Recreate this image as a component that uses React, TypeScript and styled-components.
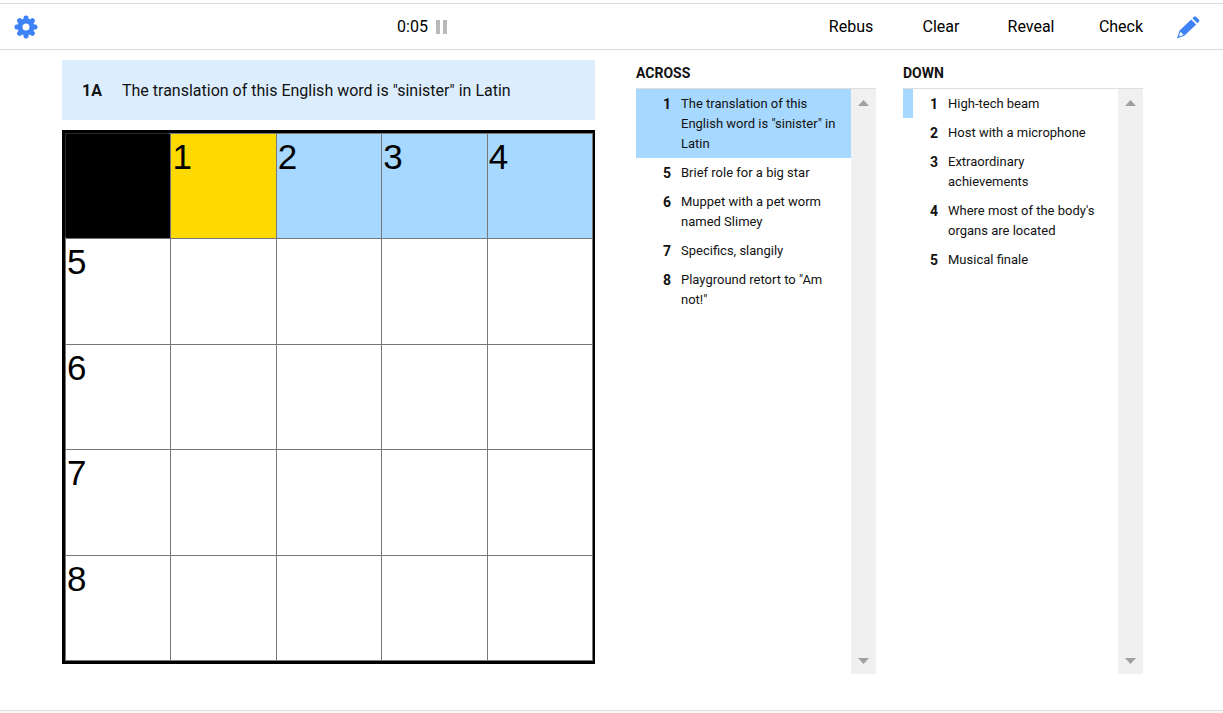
import React, { useState } from "react";
import styled, { createGlobalStyle } from "styled-components";

const GlobalStyle = createGlobalStyle`
  *, *::before, *::after { box-sizing: border-box; }
  body {
    margin: 0;
    background: #fff;
    color: #121212;
    font-family: Roboto, "Liberation Sans", sans-serif;
    font-size: 16px;
  }
  button {
    margin: 0;
    padding: 0;
    border: 0;
    background: none;
    color: inherit;
    font: inherit;
    cursor: pointer;
  }
`;

const Page = styled.div`
  display: flex;
  flex-direction: column;
  min-height: 100vh;
  padding-top: 3px;
`;

const Toolbar = styled.header`
  display: flex;
  align-items: stretch;
  height: 47px;
  padding: 0 13px;
  border-top: 1px solid #dcdcdc;
  border-bottom: 1px solid #dcdcdc;
`;

const IconButton = styled.button<{ $width: number }>`
  display: flex;
  align-items: center;
  justify-content: center;
  width: ${(p) => p.$width}px;
`;

const Timer = styled.button`
  display: flex;
  flex: 1;
  align-items: center;
  justify-content: center;
  gap: 8px;
  color: #000;
`;

const ToolButton = styled.button`
  width: 90px;
  color: #000;
`;

const Main = styled.main`
  display: flex;
  flex: 1;
  gap: 41px;
  padding: 10px 80px 36px 62px;
`;

const Play = styled.section`
  flex: 533 1 0;
  min-width: 0;
`;

const ClueBar = styled.div`
  display: flex;
  align-items: center;
  min-height: 60px;
  margin-bottom: 10px;
  padding: 0 20px;
  background: #dceefe;
`;

const ClueLabel = styled.strong`
  width: 40px;
  font-weight: 700;
`;

const Board = styled.div`
  display: grid;
  grid-template-columns: repeat(5, 1fr);
  gap: 1px;
  padding: 1px;
  border: 3px solid #000;
  border-right-width: 2px;
  background: #777;
`;

type CellState = "block" | "current" | "word" | "empty";

const cellColors: Record<CellState, string> = {
  block: "#000",
  current: "#ffda00",
  word: "#a7d8ff",
  empty: "#fff",
};

const Cell = styled.button<{ $state: CellState }>`
  display: flex;
  align-items: flex-start;
  aspect-ratio: 1;
  padding: 3px 1px;
  background: ${(p) => cellColors[p.$state]};
  box-shadow: ${(p) => (p.$state === "block" ? "-1px -1px 0 #2c2c2c" : "none")};
  color: #000;
  font-family: "Liberation Sans", Arial, sans-serif;
  font-size: 35px;
  line-height: 40px;
`;

const Clues = styled.div`
  display: flex;
  flex: 507 1 0;
  gap: 27px;
  min-width: 0;
`;

const ClueColumn = styled.section`
  display: flex;
  flex: 1 1 0;
  flex-direction: column;
  min-width: 0;
`;

const Heading = styled.h2`
  margin: 0;
  padding: 3px 0 5px;
  font-size: 14px;
  font-weight: 700;
  line-height: 20px;
`;

const Scroller = styled.div`
  display: flex;
  flex: 1;
  border-top: 1px solid #dedede;
`;

const List = styled.ol`
  flex: 1;
  min-width: 0;
  margin: 0;
  padding: 0;
  list-style: none;
`;

type Mark = "selected" | "crossing" | undefined;

const ClueButton = styled.button<{ $mark: Mark }>`
  display: grid;
  grid-template-columns: 25px minmax(0, 1fr);
  column-gap: 10px;
  width: 100%;
  padding: 5px 12px 4px 0;
  border-left: 10px solid ${(p) => (p.$mark ? "#a7d8ff" : "transparent")};
  background: ${(p) => (p.$mark === "selected" ? "#a7d8ff" : "transparent")};
  font-size: 13px;
  line-height: 20px;
  text-align: left;
`;

const ClueNumber = styled.span`
  font-size: 14px;
  font-weight: 700;
  text-align: right;
`;

const ScrollTrack = styled.div`
  display: flex;
  flex-direction: column;
  justify-content: space-between;
  width: 25px;
  background: #f0f0f0;
`;

const ScrollArrow = styled.button`
  display: flex;
  align-items: center;
  justify-content: center;
  height: 27px;
`;

const Footer = styled.footer`
  height: 3px;
  border-top: 1px solid #dedede;
  background: #f9f9f9;
`;

const GearIcon = () => (
  <svg width="24" height="24" viewBox="-12 -12 24 24" aria-hidden="true">
    <g fill="#3e82f7">
      {[0, 45, 90, 135, 180, 225, 270, 315].map((angle) => (
        <rect key={angle} x="-2.5" y="-11.5" width="5" height="7" rx="2.2" transform={`rotate(${angle})`} />
      ))}
    </g>
    <circle r="6" fill="none" stroke="#3e82f7" strokeWidth="5" />
  </svg>
);

const PencilIcon = () => (
  <svg width="24" height="24" viewBox="0 0 24 24" aria-hidden="true">
    <g fill="#3e82f7">
      <path d="M15.2 4.4 L20.2 9.4 L8.6 20.6 L1 23.4 L3.6 15.6 Z" />
      <path d="M16.4 3.2 L18 1.7 Q19 .8 20 1.7 L23 4.7 Q23.8 5.7 23 6.6 L21.4 8.2 Z" />
    </g>
    <path d="M4.5 16.8 L7.5 19.8 L3.8 21.3 L3.1 20.6 Z" fill="#fff" />
  </svg>
);

const PauseIcon = () => (
  <svg width="11" height="14" viewBox="0 0 11 14" aria-hidden="true">
    <path d="M0 0h4v14H0zM7 0h4v14H7z" fill="#b9b9b9" />
  </svg>
);

const Triangle = ({ down = false }: { down?: boolean }) => (
  <svg width="11" height="6" viewBox="0 0 11 6" aria-hidden="true">
    <path d={down ? "M0 0H11L5.5 6Z" : "M0 6H11L5.5 0Z"} fill="#a0a0a0" />
  </svg>
);

interface Clue {
  number: number;
  text: string;
}

const across: Clue[] = [
  { number: 1, text: 'The translation of this English word is "sinister" in Latin' },
  { number: 5, text: "Brief role for a big star" },
  { number: 6, text: "Muppet with a pet worm named Slimey" },
  { number: 7, text: "Specifics, slangily" },
  { number: 8, text: 'Playground retort to "Am not!"' },
];

const down: Clue[] = [
  { number: 1, text: "High-tech beam" },
  { number: 2, text: "Host with a microphone" },
  { number: 3, text: "Extraordinary achievements" },
  { number: 4, text: "Where most of the body's organs are located" },
  { number: 5, text: "Musical finale" },
];

const cellNumbers: Record<number, number> = { 1: 1, 2: 2, 3: 3, 4: 4, 5: 5, 10: 6, 15: 7, 20: 8 };

const ClueList = ({ title, clues, mark }: { title: string; clues: Clue[]; mark: Mark }) => (
  <ClueColumn>
    <Heading>{title}</Heading>
    <Scroller>
      <List>
        {clues.map((clue) => (
          <li key={clue.number}>
            <ClueButton $mark={clue.number === 1 ? mark : undefined}>
              <ClueNumber>{clue.number}</ClueNumber>
              <span>{clue.text}</span>
            </ClueButton>
          </li>
        ))}
      </List>
      <ScrollTrack>
        <ScrollArrow aria-label={`Scroll ${title} up`}>
          <Triangle />
        </ScrollArrow>
        <ScrollArrow aria-label={`Scroll ${title} down`}>
          <Triangle down />
        </ScrollArrow>
      </ScrollTrack>
    </Scroller>
  </ClueColumn>
);

export default function App() {
  const [current, setCurrent] = useState(1);

  const stateOf = (index: number): CellState => {
    if (index === 0) return "block";
    if (index === current) return "current";
    return Math.floor(index / 5) === Math.floor(current / 5) ? "word" : "empty";
  };

  return (
    <>
      <GlobalStyle />
      <Page>
        <Toolbar>
          <IconButton $width={25} aria-label="Settings">
            <GearIcon />
          </IconButton>
          <Timer aria-label="Pause timer">
            <span>0:05</span>
            <PauseIcon />
          </Timer>
          {["Rebus", "Clear", "Reveal", "Check"].map((name) => (
            <ToolButton key={name}>{name}</ToolButton>
          ))}
          <IconButton $width={44} aria-label="Pencil">
            <PencilIcon />
          </IconButton>
        </Toolbar>
        <Main>
          <Play>
            <ClueBar>
              <ClueLabel>1A</ClueLabel>
              <span>{across[0].text}</span>
            </ClueBar>
            <Board>
              {Array.from({ length: 25 }, (_, index) => (
                <Cell
                  key={index}
                  $state={stateOf(index)}
                  disabled={index === 0}
                  aria-label={`Cell ${index + 1}`}
                  onClick={() => setCurrent(index)}
                >
                  {cellNumbers[index]}
                </Cell>
              ))}
            </Board>
          </Play>
          <Clues>
            <ClueList title="ACROSS" clues={across} mark="selected" />
            <ClueList title="DOWN" clues={down} mark="crossing" />
          </Clues>
        </Main>
        <Footer />
      </Page>
    </>
  );
}
